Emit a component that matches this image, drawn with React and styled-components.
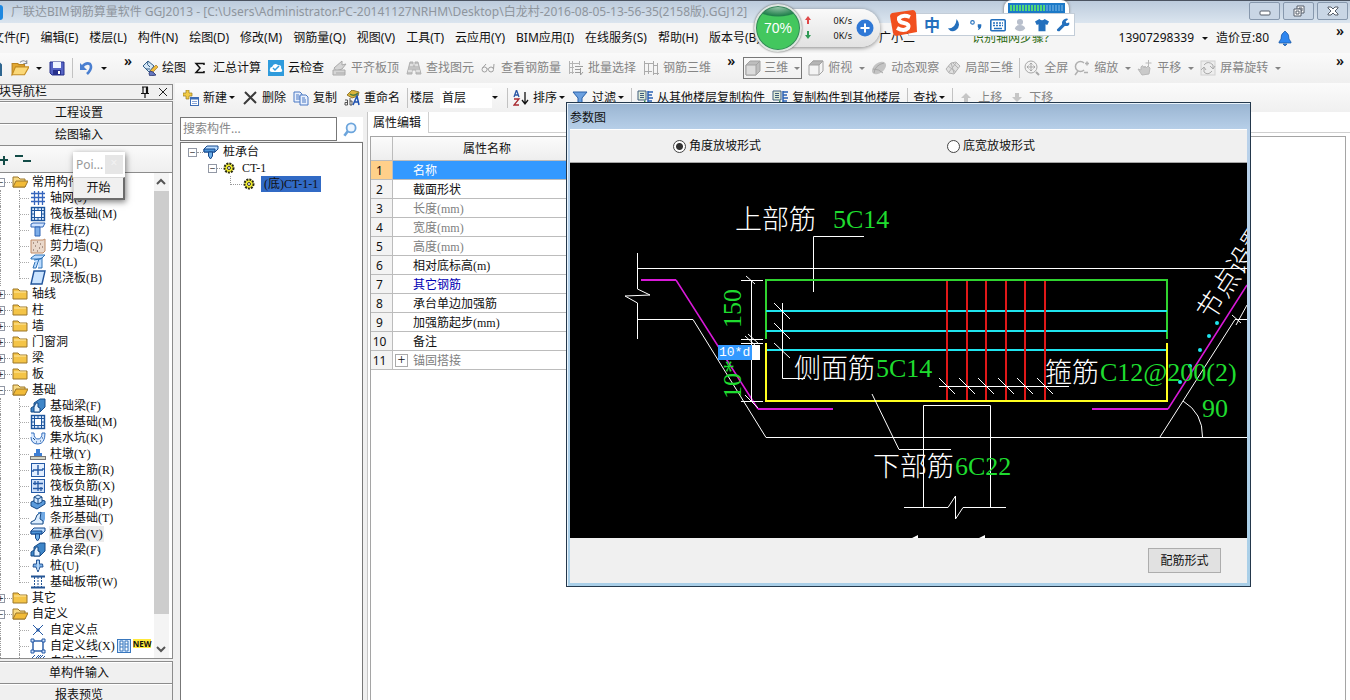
import React, { useState } from "react";
import styled, { createGlobalStyle } from "styled-components";

const GlobalStyle = createGlobalStyle`
  * {
    box-sizing: border-box;
  }

  body {
    margin: 0;
    overflow: hidden;
    background: #f0f0f0;
    color: #111111;
    font-family: "Noto Sans", "Noto Sans CJK SC", sans-serif;
    font-size: 12px;
    line-height: 16px;
  }

  button,
  input,
  select {
    margin: 0;
    padding: 0;
    border: 0;
    background: none;
    color: inherit;
    font: inherit;
  }
`;

const songFont = `"Liberation Serif", "Noto Sans CJK SC", serif`;

const beamShape = (
  <>
    <path d="M1 14V10L4 8V5L10 1H15V9L10 14Z" fill="#3f86c8" stroke="#174a86" />
    <path d="M4 14V9L6 5H8V9L10 10V14Z" fill="#e4f2ff" stroke="#174a86" />
  </>
);

const raftShape = (
  <g fill="none" stroke="#1d559c">
    <rect x="1.500" y="1.500" width="13" height="13" fill="#dcecff" strokeWidth="1.400" />
    <rect x="4.500" y="4.500" width="7" height="7" fill="#ffffff" />
    <path d="M4.500 2V14M11.500 2V14M2 4.500H14M2 11.500H14M8 2V4M8 12V14M2 8H4M12 8H14" />
  </g>
);

const pileCapShape = (
  <>
    <path d="M1 5L4 2H15V5L12 8H1Z" fill="#b9dcff" stroke="#17498c" />
    <path d="M1 5H12V8H1Z" fill="#4c94d8" stroke="#17498c" />
    <path d="M5.500 8H9.500V12L7.500 15L5.500 12Z" fill="#6fb0ea" stroke="#17498c" />
  </>
);

const shapes = {
  file: <path d="M1 1H9L13 5V15H1Z" fill="#fff" stroke="#2f6690" strokeWidth="2" />,
  open: (
    <>
      <path d="M1 4H6L7 5H12V8H5L1 14Z" fill="#e3a830" stroke="#b98320" />
      <path d="M4 7H16L12 14H1Z" fill="#fbd878" stroke="#c48c22" />
      <path d="M8 3Q11 0 14 3M14 1V4H11" fill="none" stroke="#8a8f98" />
    </>
  ),
  save: (
    <>
      <path d="M1 2H15V15H3L1 13Z" fill="#5563c4" stroke="#27318c" />
      <rect x="4" y="2" width="8" height="6" fill="#f0f4ff" />
      <rect x="4" y="10" width="8" height="5" fill="#27318c" />
      <rect x="9" y="11" width="2" height="3" fill="#fff" />
    </>
  ),
  undo: (
    <>
      <path d="M4 7Q8 2 12 4Q15 8 9 14" fill="none" stroke="#4a7fd0" strokeWidth="2.600" />
      <path d="M2 3V10H9Z" fill="#4a7fd0" />
    </>
  ),
  paint: (
    <>
      <path d="M1 6L6 1L12 6L7 12Z" fill="#d5e6f4" stroke="#345f89" />
      <path d="M6 1Q4 5 8 7M4 9H8" fill="none" stroke="#345f89" />
      <path d="M14 5L8 11L10 13L16 7Z" fill="#f0bc3c" stroke="#9a6a18" strokeWidth=".6" />
      <path d="M8 11Q6 14 8 16L14 15L11 12Z" fill="#6677bd" stroke="#3c4880" />
    </>
  ),
  sigma: <path d="M11 5V3.500H3L7 8L3 12.500H11V11" fill="none" stroke="#111" strokeWidth="1.500" />,
  cloud: (
    <>
      <rect width="16" height="16" fill="#2f9bdc" />
      <path d="M4 12Q1 12 2 9Q2 7 4 7Q6 2 10 5Q14 5 13 8Q16 12 12 12Z" fill="#fff" />
      <path d="M5 8L7 10L11 6" fill="none" stroke="#2f9bdc" strokeWidth="1.500" />
    </>
  ),
  flush: (
    <g fill="#d5d5d5" stroke="#a9a9a9">
      <path d="M3 8L11 1V5L15 4L11 9L5 11Z" />
      <path d="M2 10H14V15H2ZM5 13H14" />
    </g>
  ),
  binoculars: (
    <g fill="#c3c3c3" stroke="#b0b0b0">
      <path d="M4 2H7V6H9V2H12L15 14H10V10H6V14H1Z" />
      <path d="M4 5H7M9 5H12M2 11H6M10 11H14" stroke="#fff" />
    </g>
  ),
  glasses: (
    <g fill="none" stroke="#9f9f9f">
      <circle cx="3.500" cy="9.500" r="2.500" />
      <circle cx="10" cy="9.500" r="2.500" />
      <path d="M6 9H7.500M1.500 8L5 4M12.500 9L13 4" />
    </g>
  ),
  batch: (
    <g fill="none" stroke="#b4b4b4">
      <path d="M1.500 1V14M4.500 1V14M1 3.500H11M1 7.500H6M1 12.500H6M11.500 1V5" />
      <path d="M7 6.500H15M7 9.500H13M7 12.500H12M12.500 8V15L15 12" stroke="#9c9c9c" />
    </g>
  ),
  rebar: (
    <path
      d="M1.500 1V15M5.500 3V14M10.500 1V15M14.500 3V15M1 3.500H10M1 11.500H9M10 5.500H15M11 13.500H16"
      fill="none"
      stroke="#ababab"
    />
  ),
  cube: (
    <g stroke="#a2a2a2">
      <path d="M1 5L5 1H15V11L11 15H1Z" fill="#bdbdbd" />
      <path d="M1 5H11V15H1Z" fill="#dcdcdc" />
      <path d="M11 5L15 1" />
    </g>
  ),
  cubeTop: (
    <g stroke="#a2a2a2">
      <path d="M1 5L5 1H15V11L11 15H1Z" fill="#f4f4f4" />
      <path d="M1 5L5 1H15L11 5Z" fill="#b5b5b5" />
      <path d="M11 5V15" />
    </g>
  ),
  orbit: (
    <g>
      <ellipse cx="8" cy="8" rx="8" ry="5" fill="#c4c4c4" transform="rotate(-38 8 8)" />
      <path d="M3 13Q4 5 13 3M2 9Q8 9 12 13" fill="none" stroke="#a6a6a6" />
    </g>
  ),
  local: (
    <g fill="#e0e0e0" stroke="#b2b2b2">
      <path d="M1 9L6 3L11 2L15 6L9 14L4 13Z" />
      <path d="M3 6L11 12M8 3L13 8M11 3L4 12M6 3L9 13" fill="none" />
    </g>
  ),
  full: (
    <g fill="none" stroke="#a7a7a7">
      <circle cx="7" cy="7" r="6" fill="#f2f2f2" />
      <path d="M12 12L15 15" strokeWidth="2" />
      <path d="M7 3V11M3 7H11M5.500 4.500L7 3L8.500 4.500M5.500 9.500L7 11L8.500 9.500M4.500 5.500L3 7L4.500 8.500M9.500 5.500L11 7L9.500 8.500" />
    </g>
  ),
  zoom: (
    <g fill="none" stroke="#b0b0b0">
      <path d="M10 3A5 5 0 1 0 10 10" strokeWidth="1.500" />
      <path d="M4 11L1 15M11 3.500H15M13 1.500V5.500M10 12.500H14" strokeWidth="1.500" />
    </g>
  ),
  pan: (
    <g fill="#cacaca" stroke="#b8b8b8">
      <path d="M1 9L4 10V7Q6 4 7 8L8 6L9 8L11 6L13 8L12 14L5 15Z" />
      <path d="M11.500 0V6M8.500 3H14.500" />
    </g>
  ),
  rotate: (
    <g fill="none" stroke="#ababab">
      <rect x="1" y="1" width="14" height="14" fill="#ededed" stroke="#d0d0d0" />
      <path d="M4 5Q8 0 13 5V9M12 11Q8 16 4 12V8M10 6L13 9L15 6M1 10L4 7L6 10" />
    </g>
  ),
  add: (
    <>
      <path d="M3 0H6V3H9V6H6V9H3V6H0V3H3Z" fill="#f1ca45" stroke="#9a7d20" strokeWidth=".7" />
      <rect x="7.500" y="7.500" width="8" height="8" fill="#fff" stroke="#3e6db5" />
      <path d="M7 8.500H16" stroke="#3e6db5" strokeWidth="2" />
      <path d="M9 11.500H14M9 13.500H14" stroke="#8aa6d8" />
    </>
  ),
  remove: <path d="M3 2L14 13M14 2L2 14" fill="none" stroke="#3a3a3a" strokeWidth="2" />,
  copy: (
    <g fill="#e8f0fd" stroke="#4b79c3">
      <path d="M1 2H7L9 4V12H1ZM3 5H6M3 7H7M3 9H7" />
      <path d="M7 5H13L15 7V15H7ZM9 8H12M9 10H13M9 12H13" />
    </g>
  ),
  rename: (
    <>
      <path d="M3 5L8 0L15 2L14 6L8 8Z" fill="#dcb53b" stroke="#80631a" strokeWidth=".8" />
      <path d="M6 4Q10 7 14 3" fill="none" stroke="#4d7b3e" strokeWidth="1.500" />
      <path d="M1 10H3.500V15H1V12.500H3.500M6 8V15H8V11H6" fill="none" stroke="#444" strokeWidth=".9" />
      <path d="M9 15L13 6L15 15M10 12H15" fill="none" stroke="#1f52b0" strokeWidth="1.500" />
    </>
  ),
  sort: (
    <>
      <path d="M1 7L3.500 0L6 7M2 5H5" fill="none" stroke="#2b57a5" strokeWidth="1.300" />
      <path d="M1 9H6L1 15H6" fill="none" stroke="#a82a30" strokeWidth="1.300" />
      <path d="M12 2V13M9 10L12 14L15 10" fill="none" stroke="#111" strokeWidth="1.300" />
    </>
  ),
  filter: <path d="M1 2H15L10 8V15L6 12V8Z" fill="#6ba0e0" stroke="#2a61a8" />,
  floors: (
    <>
      <path d="M1 1H9V10H1ZM3 3.500H7M3 5.500H7M3 7.500H7" fill="#e0ecd8" stroke="#3f5c7c" />
      <path d="M11 1V15M11 2H16M11 5H15M11 8H16M11 11H15M11 14H16" stroke="#2b62b4" strokeWidth="1.500" />
      <path d="M4 15V12H7V10L10 13L7 16V15Z" fill="#2e8a4a" />
    </>
  ),
  up: <path d="M8 3L13 8H10V12H6V8H3Z" fill="#c6c6c6" />,
  down: <path d="M8 12L3 7H6V3H10V7H13Z" fill="#c6c6c6" />,
  folder: (
    <>
      <path d="M1 3H6L8 5H15V13H1Z" fill="#f4c447" stroke="#9b762b" />
      <path d="M2 6H14" stroke="#ffe9a6" />
    </>
  ),
  folderOpen: (
    <>
      <path d="M1 3H6L8 5H13V13H1Z" fill="#f8da83" stroke="#9b762b" />
      <path d="M4 7H16L13 13H1Z" fill="#f2bb38" stroke="#9b762b" />
    </>
  ),
  axis: (
    <path
      d="M4.500 1V15M8.500 1V15M12.500 1V15M1 3.500H15M1 7.500H15M1 11.500H15"
      fill="none"
      stroke="#3565bd"
      strokeWidth="1.300"
    />
  ),
  raft: raftShape,
  column: (
    <g fill="#cfe3ff" stroke="#2f65b5">
      <path d="M1 2L3 1H15L13 5H1Z" />
      <path d="M5 5H10V14H5Z" fill="#7eaee8" />
    </g>
  ),
  wall: (
    <>
      <path d="M1 2H13L15 1V13L13 15H1Z" fill="#ead9cb" stroke="#bd8a67" />
      <path d="M3 5H4M7 4H8M10 6H11M5 8H6M9 10H10M3 12H4M7 13H8M12 9H13" stroke="#6e5044" />
    </>
  ),
  beam: (
    <path
      d="M1 4L5 1H15L11 5H1ZM4 6L9 5L6 14H3L5 8M9 5L12 4V14H8"
      fill="#bcdcff"
      stroke="#2f72b5"
    />
  ),
  slab: <path d="M4 1H15L12 14H1Z" fill="#cbe4ff" stroke="#23559c" strokeWidth="1.400" />,
  foundBeam: beamShape,
  pit: (
    <>
      <path d="M1 3H4Q4 9 8 9T12 3H15Q15 14 8 14T1 7" fill="#d8e9ff" stroke="#356fbd" />
      <path d="M3 8L5 10M6 12H7M10 11H11M12 8H13" stroke="#174a86" />
    </>
  ),
  pier: (
    <>
      <path d="M6 3H10V7H12V10H4V7H6Z" fill="#3e7fd4" />
      <rect x=".5" y="10.500" width="15" height="3" fill="#d4d4c4" stroke="#777" />
    </>
  ),
  mainBar: (
    <g fill="none" stroke="#2459a5">
      <rect x="1.500" y="1.500" width="13" height="13" fill="#e3efff" />
      <path d="M8 3V13M3 8H13M3 8V10M13 8V6" strokeWidth="1.400" />
    </g>
  ),
  negBar: (
    <g fill="none" stroke="#2459a5">
      <rect x="1.500" y="1.500" width="13" height="13" fill="#cfe1fa" />
      <path d="M8 3V13M3 5.500H13M3 10.500H13M5 3V7M11 9V13" strokeWidth="1.300" />
    </g>
  ),
  isolated: (
    <g stroke="#174a86">
      <path d="M1 8L8 5L15 7V10L7 15L1 12Z" fill="#5a9adb" />
      <path d="M4 3L8 1L12 3V8L8 10L4 8Z" fill="#cce5ff" />
      <path d="M8 5V10M8 5L12 3M4 3L8 5" />
    </g>
  ),
  strip: (
    <>
      <path d="M8 2H15V9L13 14H9Z" fill="#70a9e4" />
      <path d="M1 14V12L5 10L7 5L11 2L10 9L13 11V14Z" fill="#dceeff" stroke="#174a86" />
    </>
  ),
  pileCap: pileCapShape,
  pile: (
    <g stroke="#245595">
      <path d="M6.500 2H9.500V6H12.500L13 9H10L8 14L6 9H3L3.500 6H6.500Z" fill="#7fb4eb" />
      <path d="M8 3V12" stroke="#e9f5ff" />
    </g>
  ),
  band: (
    <g stroke="#245595">
      <path d="M1 2.500H15M1 13.500H15" strokeWidth="2" />
      <path d="M4.500 3V13M8 3V13M11.500 3V13" strokeDasharray="2 1" />
    </g>
  ),
  point: <path d="M3 3L13 13M13 3L3 13M6 8H10M8 6V10" stroke="#2459a5" />,
  line: (
    <g fill="#fff" stroke="#2459a5">
      <rect x="3" y="3" width="10" height="10" strokeWidth="1.400" />
      <path d="M1 1H4V4H1ZM12 1H15V4H12ZM1 12H4V15H1ZM12 12H15V15H12Z" fill="#cfe3ff" />
    </g>
  ),
  area: <path d="M1 5L5 1M5 5L9 1M9 5L13 1M1 11L11 1M3 14L15 2" stroke="#2459a5" />,
  gear: (
    <>
      <circle cx="7" cy="8" r="4.500" fill="#f3ee2c" stroke="#2a2a12" strokeDasharray="2 1" strokeWidth="2" />
      <circle cx="7" cy="8" r="1.500" fill="#fff" stroke="#333" />
    </>
  ),
  search: (
    <>
      <circle cx="9" cy="7" r="4" fill="#eef6ff" stroke="#6ca5dc" strokeWidth="1.600" />
      <path d="M6 10L3 14" stroke="#6ca5dc" strokeWidth="2.400" />
    </>
  ),
  pin: <path d="M5 3H11M6 3V9M9.500 3V9M10.500 3V9M4 9.500H12M8 10V14" stroke="#111" strokeWidth="1.200" fill="none" />,
  close: <path d="M4 4L12 12M12 4L4 12" stroke="#222" />,
  bell: (
    <path
      d="M8 1L10 3Q12 4 12 9L14 12V13H2V12L4 9Q4 4 6 3ZM6 14H10L8 16Z"
      fill="#2e86f0"
      stroke="#16539e"
      strokeWidth=".7"
    />
  ),
  compare: (
    <g fill="#fff" stroke="#3977bd">
      <rect x="1.500" y="1.500" width="13" height="13" fill="#d7eaff" />
      <path d="M4 3H7V13H4ZM9 3H12V13H9ZM4 6H7M4 9H7M9 6H12M9 9H12" />
    </g>
  ),
  moon: <path d="M11 1Q17 9 10 14Q5 17 1 12Q10 12 11 1Z" fill="#2470bd" />,
  comma: (
    <>
      <circle cx="4" cy="5" r="2" fill="none" stroke="#2470bd" strokeWidth="1.300" />
      <path d="M10 7H14Q15 12 10 14Q12 12 10 10Z" fill="#2470bd" />
    </>
  ),
  keyboard: (
    <>
      <rect x=".8" y="2.800" width="14.400" height="11" rx="1" fill="#fff" stroke="#2470bd" strokeWidth="1.600" />
      <path d="M3 6H13M3 8.500H13" stroke="#2470bd" strokeWidth="1.500" strokeDasharray="2 1" />
      <path d="M4 11.500H12" stroke="#2470bd" strokeWidth="1.500" />
    </>
  ),
  person: (
    <g fill="#b8bfcc">
      <circle cx="8" cy="4.500" r="3.500" />
      <path d="M2 12Q3 8 8 8T14 12Q12 15 8 15T2 12Z" />
    </g>
  ),
  shirt: <path d="M5 1Q8 4 11 1L16 4L14 8L12 7V15H4V7L2 8L0 4Z" fill="#2470bd" />,
  wrench: (
    <path
      d="M10 1Q12 0 14 1L11 4L12 6L15 5Q16 8 13 9L10 9L4 15Q1 16 1 13L7 7Q6 3 10 1Z"
      fill="#2470bd"
    />
  ),
};

const Icon = ({ name, size = 16 }) => (
  <IconSvg viewBox="0 0 16 16" width={size} height={size} aria-hidden="true">
    {shapes[name]}
  </IconSvg>
);

const IconSvg = styled.svg`
  display: block;
  flex: none;
  fill: none;
`;

const menus = [
  "文件(F)",
  "编辑(E)",
  "楼层(L)",
  "构件(N)",
  "绘图(D)",
  "修改(M)",
  "钢筋量(Q)",
  "视图(V)",
  "工具(T)",
  "云应用(Y)",
  "BIM应用(I)",
  "在线服务(S)",
  "帮助(H)",
  "版本号(B)",
];

const drawTools = [
  { icon: "paint", label: "绘图" },
  { icon: "sigma", label: "汇总计算" },
  { icon: "cloud", label: "云检查" },
  { icon: "flush", label: "平齐板顶", dim: true },
  { icon: "binoculars", label: "查找图元", dim: true },
  { icon: "glasses", label: "查看钢筋量", dim: true },
  { icon: "batch", label: "批量选择", dim: true },
  { icon: "rebar", label: "钢筋三维", dim: true },
];

const viewTools = [
  { icon: "cubeTop", label: "俯视", caret: true },
  { icon: "orbit", label: "动态观察" },
  { icon: "local", label: "局部三维" },
  { divider: true },
  { icon: "full", label: "全屏" },
  { icon: "zoom", label: "缩放", caret: true },
  { icon: "pan", label: "平移", caret: true },
  { icon: "rotate", label: "屏幕旋转", caret: true },
];

const componentTree = [
  { label: "常用构件类型", open: true },
  { label: "轴网(J)", icon: "axis" },
  { label: "筏板基础(M)", icon: "raft" },
  { label: "框柱(Z)", icon: "column" },
  { label: "剪力墙(Q)", icon: "wall" },
  { label: "梁(L)", icon: "beam" },
  { label: "现浇板(B)", icon: "slab", last: true },
  { label: "轴线" },
  { label: "柱" },
  { label: "墙" },
  { label: "门窗洞" },
  { label: "梁" },
  { label: "板" },
  { label: "基础", open: true },
  { label: "基础梁(F)", icon: "foundBeam" },
  { label: "筏板基础(M)", icon: "raft" },
  { label: "集水坑(K)", icon: "pit" },
  { label: "柱墩(Y)", icon: "pier" },
  { label: "筏板主筋(R)", icon: "mainBar" },
  { label: "筏板负筋(X)", icon: "negBar" },
  { label: "独立基础(P)", icon: "isolated" },
  { label: "条形基础(T)", icon: "strip" },
  { label: "桩承台(V)", icon: "pileCap", active: true },
  { label: "承台梁(F)", icon: "foundBeam" },
  { label: "桩(U)", icon: "pile" },
  { label: "基础板带(W)", icon: "band", last: true },
  { label: "其它" },
  { label: "自定义", open: true },
  { label: "自定义点", icon: "point" },
  { label: "自定义线(X)", icon: "line", isNew: true },
  { label: "自定义面", icon: "area" },
];

const properties = [
  { name: "名称" },
  { name: "截面形状" },
  { name: "长度(mm)", color: "#808080" },
  { name: "宽度(mm)", color: "#808080" },
  { name: "高度(mm)", color: "#808080" },
  { name: "相对底标高(m)" },
  { name: "其它钢筋", color: "#0000b4" },
  { name: "承台单边加强筋" },
  { name: "加强筋起步(mm)" },
  { name: "备注" },
  { name: "锚固搭接", color: "#808080", group: true },
];

const stirrups = [947, 967, 986, 1006, 1025, 1045];
const anchorDots = [
  [1217, 323],
  [1209, 336],
  [1200, 350],
  [1190, 366],
  [1180, 382],
];

const ToolItem = ({ icon, label, dim, caret, framed }) => (
  <ToolButton type="button" $dim={dim} $framed={framed}>
    {icon && <Icon name={icon} />}
    {label}
    {caret && <Caret $gap={dim ? 3 : -2} />}
  </ToolButton>
);

const SectionDrawing = () => (
  <Drawing viewBox="570 163 677 375" preserveAspectRatio="xMinYMin slice">
    <g stroke="#ffffff">
      <path d="M637.500 253V289L650 295L625 296L637.500 303V339" />
      <path d="M637 268.500H1247" />
      <path d="M637 319.500H693L766 437.500H1247" />
      <path d="M864 236.500H813.500V292" />
    </g>
    <g stroke="#d819d8">
      <path d="M641 280H676M758 409H833M1092 409H1168" strokeWidth="2" />
      <path d="M676 280L758 409M1168 409L1247 285" strokeWidth="1.500" />
    </g>
    <path d="M766 339V280H1167V339" stroke="#2fd32f" strokeWidth="2" />
    <path d="M766 311H1167M766 331H1167M766 350H1167" stroke="#1fe4ee" strokeWidth="2" />
    {stirrups.map((x) => (
      <path key={x} d={`M${x} 281V401`} stroke="#e01818" strokeWidth="2" />
    ))}
    <path d="M766 343V401H1167V343" stroke="#ffff20" strokeWidth="2" />
    <g stroke="#ffffff">
      <path d="M751.500 280V401M741 280.500H763M741 339.500H763M741 343.500H763M741 401.500H763" />
      <path d="M746 276L755 284M745 336L756 346M748 334L759 344M745 395L758 408" />
      <path d="M782.500 303V378.500H805M774 303L790 319M774 323L790 339M774 343L790 358" />
      <path d="M939 386.500H1069" />
      {stirrups.map((x) => (
        <path key={x} d={`M${x - 8} 378L${x + 8} 394`} />
      ))}
      <path d="M872 394L899 449.500H951" />
      <path d="M923.500 507V405.500H990.500V507M904 507.500H948L955.500 496V519L963 507.500H1006" />
      <path d="M1160 437L1235 319.500H1247M1232 315L1241 323M1236 325L1247 305" />
      <path d="M1183 401Q1203 413 1202.500 437" />
    </g>
    <g fill="#ffffff" stroke="none">
      <path d="M912 538L918 535V538ZM979 538L985 535V538Z" />
    </g>
    <g fill="#1fe4ee">
      {anchorDots.map(([x, y]) => (
        <circle key={x} cx={x} cy={y} r="2" />
      ))}
    </g>
    <DrawingLabel x="735" y="229">上部筋</DrawingLabel>
    <DrawingLabel x="794" y="378">侧面筋</DrawingLabel>
    <DrawingLabel x="1045" y="382">箍筋</DrawingLabel>
    <DrawingLabel x="873" y="476">下部筋</DrawingLabel>
    <DrawingLabel transform="translate(1212 322) rotate(-57)">节点设置</DrawingLabel>
    <DrawingValue x="833" y="228">5C14</DrawingValue>
    <DrawingValue x="876" y="377">5C14</DrawingValue>
    <DrawingValue x="1100" y="381">C12@200(2)</DrawingValue>
    <DrawingValue x="1202" y="417">90</DrawingValue>
    <DrawingValue x="955" y="475">6C22</DrawingValue>
    <DrawingValue transform="translate(741 328) rotate(-90)">150</DrawingValue>
    <DrawingValue transform="translate(741 399) rotate(-90)">10*d</DrawingValue>
  </Drawing>
);

const ParamDialog = () => {
  const [slope, setSlope] = useState("angle");

  return (
    <Dialog role="dialog" aria-label="参数图">
      <DialogTitle>参数图</DialogTitle>
      <DialogBody>
        <SlopeOptions>
          <SlopeLabel>
            <input
              type="radio"
              name="slope"
              checked={slope === "angle"}
              onChange={() => setSlope("angle")}
            />
            角度放坡形式
          </SlopeLabel>
          <SlopeLabel>
            <input
              type="radio"
              name="slope"
              checked={slope === "width"}
              onChange={() => setSlope("width")}
            />
            底宽放坡形式
          </SlopeLabel>
        </SlopeOptions>
        <Canvas>
          <SectionDrawing />
          <ValueInput aria-label="高度" defaultValue="10*d" />
        </Canvas>
        <DialogFooter>
          <FooterButton type="button">配筋形式</FooterButton>
        </DialogFooter>
      </DialogBody>
    </Dialog>
  );
};

const ModuleNav = () => (
  <Nav>
    <NavHeader>
      <span>模块导航栏</span>
      <Icon name="pin" />
      <Icon name="close" />
    </NavHeader>
    <NavButton type="button">工程设置</NavButton>
    <NavButton type="button">绘图输入</NavButton>
    <NavTools>
      <svg width="46" height="16" viewBox="0 0 46 16">
        <path
          d="M6 4H12M9 1V7M13 9H22M18 5V14M29 5H37M37 10H45"
          fill="none"
          stroke="#124b47"
          strokeWidth="2"
        />
      </svg>
    </NavTools>
    <TreeArea>
      <TreeList>
        {componentTree.map((item, index) =>
          item.icon ? (
            <ChildRow key={index} $last={item.last}>
              <i />
              <b />
              <Icon name={item.icon} />
              <TreeLabel $active={item.active}>{item.label}</TreeLabel>
              {item.isNew && (
                <>
                  <Icon name="compare" />
                  <NewBadge>NEW</NewBadge>
                </>
              )}
            </ChildRow>
          ) : (
            <FolderRow key={index}>
              <Expander>{item.open ? "−" : "+"}</Expander>
              <Dots $width={7} />
              <Icon name={item.open ? "folderOpen" : "folder"} />
              <TreeLabel>{item.label}</TreeLabel>
            </FolderRow>
          )
        )}
      </TreeList>
      <ScrollTrack>
        <svg width="14" height="18" viewBox="0 0 14 18">
          <path d="M3 11L7 7L11 11" fill="none" stroke="#555" strokeWidth="2" />
        </svg>
        <ScrollThumb />
        <ScrollRest />
        <svg width="14" height="18" viewBox="0 0 14 18">
          <path d="M3 7L7 11L11 7" fill="none" stroke="#555" strokeWidth="2" />
        </svg>
      </ScrollTrack>
    </TreeArea>
    <NavButton type="button">单构件输入</NavButton>
    <NavButton type="button">报表预览</NavButton>
  </Nav>
);

const App = () => (
  <>
    <GlobalStyle />
    <Page>
      <TitleBar>
        <AppMark />
        <span>
          广联达BIM钢筋算量软件 GGJ2013 - [C:\Users\Administrator.PC-20141127NRHM\Desktop\白龙村-2016-08-05-13-56-35(2158版).GGJ12]
        </span>
        <WindowButtons>
          <button type="button" aria-label="最小化">
            <svg width="16" height="16" viewBox="0 0 16 16">
              <rect x="3" y="8" width="10" height="4" rx="1" fill="#fff" stroke="#555d68" />
            </svg>
          </button>
          <button type="button" aria-label="还原">
            <svg width="16" height="16" viewBox="0 0 16 16" fill="#fff" stroke="#555d68">
              <path d="M6 3H13V10H6ZM8 5H11V8H8Z" />
              <path d="M3 6H10V13H3ZM5 8H8V11H5Z" />
            </svg>
          </button>
          <button type="button" aria-label="关闭">
            <svg width="16" height="16" viewBox="0 0 16 16">
              <path
                d="M3 4H6L8 6L10 4H13V5L10 8L13 11V12H10L8 10L6 12H3V11L6 8L3 5Z"
                fill="#fff"
                stroke="#555d68"
              />
            </svg>
          </button>
        </WindowButtons>
      </TitleBar>

      <MenuBar>
        <MenuList>
          {menus.map((menu) => (
            <button type="button" key={menu}>
              {menu}
            </button>
          ))}
        </MenuList>
        <UserName>广小二</UserName>
        <HelpLink href="#help">识别轴网步骤?</HelpLink>
        <Account>
          13907298339
          <Caret />
          <span>造价豆:80</span>
          <Icon name="bell" />
        </Account>
        <More>»</More>
      </MenuBar>

      <ToolBar>
        <QuickTools>
          <Icon name="file" />
          <Icon name="open" size={18} />
          <Caret />
          <Icon name="save" />
          <Divider />
          <Icon name="undo" />
          <Caret />
        </QuickTools>
        <More>»</More>
        <DrawGroup>
          {drawTools.map((tool) => (
            <ToolItem key={tool.label} {...tool} />
          ))}
        </DrawGroup>
        <More>»</More>
        <ViewGroup>
          <ToolItem icon="cube" label="三维" dim caret framed />
          {viewTools.map((tool, index) =>
            tool.divider ? <Divider key={index} /> : <ToolItem key={index} dim {...tool} />
          )}
        </ViewGroup>
        <LastMore>»</LastMore>
      </ToolBar>

      <Workspace>
        <ModuleNav />
        <Main>
          <EditBar>
            <ToolItem icon="add" label="新建" caret />
            <ToolItem icon="remove" label="删除" />
            <ToolItem icon="copy" label="复制" />
            <ToolItem icon="rename" label="重命名" />
            <FloorField>
              楼层
              <FloorSelect defaultValue="首层">
                <option>首层</option>
              </FloorSelect>
              <Caret />
            </FloorField>
            <Divider />
            <ToolItem icon="sort" label="排序" caret />
            <ToolItem icon="filter" label="过滤" caret />
            <Divider />
            <ToolItem icon="floors" label="从其他楼层复制构件" />
            <ToolItem icon="floors" label="复制构件到其他楼层" />
            <Divider />
            <ToolItem label="查找" caret />
            <Divider />
            <ToolItem icon="up" label="上移" dim />
            <ToolItem icon="down" label="下移" dim />
          </EditBar>
          <Panels>
            <ComponentPanel>
              <SearchRow>
                <input type="text" aria-label="搜索构件" placeholder="搜索构件..." />
                <button type="button" aria-label="搜索">
                  <Icon name="search" size={18} />
                </button>
              </SearchRow>
              <ComponentTree>
                <ComponentRow $level={0}>
                  <Expander>−</Expander>
                  <Dots $width={6} />
                  <Icon name="pileCap" />
                  <TreeLabel>桩承台</TreeLabel>
                </ComponentRow>
                <ComponentRow $level={1}>
                  <Expander>−</Expander>
                  <Dots $width={5} />
                  <Icon name="gear" />
                  <TreeLabel>CT-1</TreeLabel>
                </ComponentRow>
                <ComponentRow $level={2}>
                  <Corner />
                  <Icon name="gear" />
                  <SelectedLabel>(底)CT-1-1</SelectedLabel>
                </ComponentRow>
              </ComponentTree>
            </ComponentPanel>
            <PropertyPanel>
              <TabRow>
                <Tab type="button">属性编辑</Tab>
              </TabRow>
              <GridFrame>
                <PropertyTable>
                  <thead>
                    <tr>
                      <th />
                      <th>属性名称</th>
                      <th />
                    </tr>
                  </thead>
                  <tbody>
                    {properties.map(({ name, color, group }, index) => (
                      <PropertyRow key={name} $selected={index === 0} $color={color}>
                        <td>{index + 1}</td>
                        <td>
                          <NameCell>
                            <span>{group && <GroupBox>+</GroupBox>}</span>
                            {name}
                          </NameCell>
                        </td>
                        <td />
                      </PropertyRow>
                    ))}
                  </tbody>
                </PropertyTable>
              </GridFrame>
            </PropertyPanel>
          </Panels>
        </Main>
      </Workspace>

      <ParamDialog />

      <PointWindow>
        <PointTitle>
          Poi...
          <span>×</span>
        </PointTitle>
        <button type="button">开始</button>
      </PointWindow>

      <SpeedWidget>
        <SpeedBall>70%</SpeedBall>
        <SpeedPill>
          <svg width="8" height="30" viewBox="0 0 8 30">
            <path d="M4 3L7 7H5V11H3V7H1Z" fill="#e04848" />
            <path d="M4 26L1 22H3V18H5V22H7Z" fill="#2f9a55" />
          </svg>
          <Speeds>
            <span>0K/s</span>
            <span>0K/s</span>
          </Speeds>
          <svg width="18" height="18" viewBox="0 0 18 18">
            <circle cx="9" cy="9" r="8.500" fill="#2f78d6" />
            <path d="M9 4.500V13.500M4.500 9H13.500" stroke="#fff" strokeWidth="2" />
          </svg>
        </SpeedPill>
      </SpeedWidget>

      <MeterTab>
        <Meter>
          {Array.from({ length: 18 }, (_, index) => (
            <MeterBar key={index} $on={index < 12} />
          ))}
        </Meter>
      </MeterTab>
      <ImeBar>
        <svg width="28" height="28" viewBox="0 0 28 28">
          <path d="M2 4L23 1Q25 1 26 4L27 23L6 27Q4 27 3 24L0 7Q0 5 2 4Z" fill="#f1501f" />
          <path
            d="M20 8Q13 5 9 9Q8 13 14 14Q20 15 18 19Q14 23 7 19"
            fill="none"
            stroke="#fff"
            strokeWidth="4"
          />
        </svg>
        <ImeTools>
          <ImeMode>中</ImeMode>
          <Icon name="moon" size={14} />
          <Icon name="comma" size={14} />
          <Icon name="keyboard" />
          <Icon name="person" size={14} />
          <Icon name="shirt" size={14} />
          <Icon name="wrench" size={14} />
        </ImeTools>
      </ImeBar>
    </Page>
  </>
);

const Page = styled.div`
  position: relative;
  display: flex;
  flex-direction: column;
  height: calc(100vh + 5px);
  overflow: hidden;
`;

const TitleBar = styled.header`
  display: flex;
  flex: none;
  align-items: center;
  height: 23px;
  border-top: 1px solid #4b5360;
  background: linear-gradient(#bccbdc, #dbe5ef);
  color: #8e959d;
  white-space: nowrap;
`;

const AppMark = styled.span`
  width: 3px;
  height: 15px;
  margin-right: 8px;
  border-radius: 0 3px 3px 0;
  background: #1e88e0;
`;

const WindowButtons = styled.div`
  display: flex;
  gap: 3px;
  margin: 0 2px 2px auto;

  button {
    display: flex;
    align-items: center;
    justify-content: center;
    width: 31px;
    height: 18px;
    border: 1px solid #8798ad;
    border-radius: 2px;
    background: #c9d6e5;
  }
`;

const MenuBar = styled.nav`
  display: flex;
  flex: none;
  align-items: center;
  height: 30px;
  background: #f5f5f5;
  white-space: nowrap;
`;

const MenuList = styled.div`
  display: flex;
  flex: none;
  gap: 11px;
  width: 887px;
  margin-left: -8px;
`;

const UserName = styled.span`
  width: 93px;
`;

const HelpLink = styled.a`
  color: #2e6b12;
  text-decoration: none;
`;

const Account = styled.div`
  display: flex;
  align-items: center;
  gap: 8px;
  margin-left: auto;
  margin-right: 43px;
`;

const More = styled.span`
  align-self: flex-start;
  width: 12px;
  margin-right: 2px;
  font-size: 14px;
  font-weight: 600;
`;

const LastMore = styled(More)`
  margin-left: auto;
`;

const Caret = styled.span`
  flex: none;
  width: 0;
  height: 0;
  margin-left: ${({ $gap = 0 }) => $gap}px;
  border: 3px solid transparent;
  border-top-color: currentColor;
  border-bottom: 0;
`;

const ToolBar = styled.div`
  display: flex;
  flex: none;
  align-items: center;
  height: 30px;
  background: linear-gradient(#fafafa, #efefef);
  white-space: nowrap;
`;

const QuickTools = styled.div`
  display: flex;
  flex: none;
  align-items: center;
  gap: 7px;
  width: 124px;
  margin-left: -12px;
  margin-right: 12px;
`;

const DrawGroup = styled.div`
  display: flex;
  gap: 7px;
  margin-left: 4px;
  margin-right: 16px;
`;

const ViewGroup = styled.div`
  display: flex;
  align-items: center;
  gap: 6px;
  margin-left: 2px;
`;

const ToolButton = styled.button`
  display: flex;
  flex: none;
  align-items: center;
  gap: ${({ $framed }) => ($framed ? "3px" : "4px")};
  height: 22px;
  padding: ${({ $framed }) => ($framed ? "0 1px" : "0")};
  border: ${({ $framed }) => ($framed ? "1px solid #777777" : "0")};
  color: ${({ $dim }) => ($dim ? "#858585" : "#111111")};
`;

const Divider = styled.span`
  flex: none;
  width: 1px;
  height: 20px;
  margin-right: -2px;
  background: #c2c2c2;
`;

const Workspace = styled.div`
  display: flex;
  flex: 1;
  min-height: 0;
`;

const Nav = styled.aside`
  display: flex;
  flex: none;
  flex-direction: column;
  width: 187px;
  margin-left: -14px;
  padding-top: 1px;
`;

const NavHeader = styled.div`
  display: flex;
  flex: none;
  align-items: center;
  height: 16px;
  margin-bottom: 1px;
  padding-right: 1px;
  border: 1px solid #8c8c8c;

  span {
    flex: 1;
  }

  svg + svg {
    margin-left: 2px;
  }
`;

const NavButton = styled.button`
  flex: none;
  height: 22px;
  border-top: 1px solid #8c8c8c;
  border-right: 1px solid #8c8c8c;
  background: #f0f0f0;
  box-shadow: inset 0 1px #ffffff;
`;

const NavTools = styled.div`
  display: flex;
  flex: none;
  align-items: center;
  height: 27px;
  border-top: 1px solid #8c8c8c;
  border-right: 1px solid #8c8c8c;
  background: linear-gradient(#fafafa, #efefef);
`;

const TreeArea = styled.div`
  display: flex;
  flex: 1;
  min-height: 0;
  margin-bottom: 2px;
  padding-right: 3px;
  border: 1px solid #8c8c8c;
  background: #ffffff;
`;

const TreeList = styled.div`
  flex: 1;
  overflow: hidden;
  padding-top: 1px;
`;

const FolderRow = styled.div`
  display: flex;
  align-items: center;
  height: 16px;
  padding-left: 9px;
`;

const ChildRow = styled(FolderRow)`
  padding-left: 13px;

  i {
    width: 19px;
    height: 16px;
    border-left: 1px dotted #999999;
  }

  b {
    align-self: flex-start;
    width: 11px;
    height: ${({ $last }) => ($last ? "9px" : "16px")};
    border-left: 1px dotted #999999;
    background: linear-gradient(90deg, #aaaaaa 50%, transparent 50%) 0 8px / 2px 1px repeat-x;
  }
`;

const Expander = styled.span`
  flex: none;
  width: 9px;
  height: 9px;
  border: 1px solid #9298a5;
  background: #ffffff;
  color: #333333;
  font-size: 10px;
  line-height: 6px;
  text-align: center;
`;

const Dots = styled.span`
  width: ${({ $width }) => $width}px;
  border-top: 1px dotted #999999;
`;

const TreeLabel = styled.span`
  margin-left: 3px;
  padding: 0 1px;
  background: ${({ $active }) => ($active ? "#ececec" : "transparent")};
  font-family: ${songFont};
  white-space: nowrap;
`;

const SelectedLabel = styled(TreeLabel)`
  padding: 0 3px;
  background: #316ac5;
`;

const NewBadge = styled.strong`
  margin-left: 1px;
  margin-bottom: 6px;
  background: #ffe93b;
  font-size: 8px;
  line-height: 9px;
`;

const ScrollTrack = styled.div`
  display: flex;
  flex: none;
  flex-direction: column;
  width: 15px;
  background: #f4f4f4;
`;

const ScrollThumb = styled.div`
  flex: 16;
  background: #cdcdcd;
`;

const ScrollRest = styled.div`
  flex: 1;
`;

const Main = styled.main`
  display: flex;
  flex: 1;
  flex-direction: column;
  min-width: 0;
  margin-left: 2px;
`;

const EditBar = styled.div`
  display: flex;
  flex: none;
  align-items: center;
  gap: 7px;
  height: 29px;
  padding-left: 8px;
  background: linear-gradient(#fbfbfb, #f0f0f0);
  white-space: nowrap;
`;

const FloorField = styled.label`
  display: flex;
  align-items: center;
  padding-left: 2px;
  padding-right: 2px;
  border-left: 1px solid #c2c2c2;
`;

const FloorSelect = styled.select`
  appearance: none;
  width: 52px;
  height: 20px;
  margin-left: 6px;
  padding-left: 2px;
  background: #ffffff;
`;

const Panels = styled.div`
  display: flex;
  flex: 1;
  min-height: 0;
`;

const ComponentPanel = styled.section`
  display: flex;
  flex: none;
  flex-direction: column;
  width: 183px;
  margin-left: 5px;
  padding-top: 5px;
`;

const SearchRow = styled.div`
  display: flex;
  flex: none;
  height: 25px;
  padding-bottom: 1px;

  input {
    flex: 1;
    min-width: 0;
    padding-left: 2px;
    border: 1px solid #777777;
    background: #ffffff;
  }

  input::placeholder {
    color: #888888;
  }

  button {
    display: flex;
    align-items: center;
    justify-content: center;
    width: 26px;
    background: #ffffff;
  }
`;

const ComponentTree = styled.div`
  flex: 1;
  padding-top: 1px;
  border: 1px solid #777777;
  background: #ffffff;
`;

const ComponentRow = styled.div`
  display: flex;
  align-items: center;
  height: 16px;
  padding-left: ${({ $level }) => 7 + $level * 20}px;
`;

const Corner = styled.span`
  align-self: flex-start;
  width: 12px;
  height: 9px;
  margin-left: 2px;
  border: 1px dotted #999999;
  border-top: 0;
  border-right: 0;
`;

const PropertyPanel = styled.section`
  display: flex;
  flex: 1;
  flex-direction: column;
  min-width: 0;
  margin-left: 4px;
  border-left: 1px solid #c6c6c6;
  background: #ffffff;
`;

const TabRow = styled.div`
  display: flex;
  flex: none;
  height: 21px;
  box-shadow: inset 0 -1px #cfcfcf;
`;

const Tab = styled.button`
  padding: 0 7px 0 5px;
  border-right: 1px solid #cfcfcf;
  background: #ffffff;
`;

const GridFrame = styled.div`
  flex: 1;
  margin: 3px 4px 0 2px;
  border: 1px solid #a5a5a5;
  border-bottom: 0;
`;

const PropertyTable = styled.table`
  width: 80%;
  border-collapse: separate;
  border-spacing: 0;
  table-layout: fixed;

  th {
    height: 24px;
    padding: 0;
    border-right: 1px solid #bcbcbc;
    border-bottom: 1px solid #bcbcbc;
    background: linear-gradient(#fbfbfb, #eeeeee);
    font-weight: 400;
  }

  th:first-child {
    width: 22px;
  }

  th:nth-child(2) {
    width: 189px;
  }
`;

const PropertyRow = styled.tr`
  color: ${({ $selected, $color }) => ($selected ? "#ffffff" : $color || "#111111")};

  td {
    height: 19px;
    padding: 1px 0 0;
    border-right: 1px solid #bcbcbc;
    border-bottom: 1px solid #bcbcbc;
    background: ${({ $selected }) => ($selected ? "#3399ff" : "#ffffff")};
    font-family: ${songFont};
  }

  td:first-child {
    padding-right: 4px;
    background: ${({ $selected }) => ($selected ? "#ffd08a" : "#f3f3f3")};
    color: #111111;
    font-family: "Noto Sans", sans-serif;
    text-align: center;
  }
`;

const NameCell = styled.span`
  display: flex;
  align-items: center;

  > span {
    width: 20px;
    padding-left: 2px;
  }
`;

const GroupBox = styled.span`
  display: block;
  width: 13px;
  height: 13px;
  border: 1px solid #aaaaaa;
  color: #111111;
  font-size: 14px;
  line-height: 10px;
  text-align: center;
`;

const Dialog = styled.section`
  position: absolute;
  top: 102px;
  left: 566px;
  width: 685px;
  padding: 1px 3px 3px;
  border: 1px solid #24384c;
  background: linear-gradient(#99b4d1, #b9d1ea 28px, #a9cfe8);
  box-shadow: inset 1px 1px #e9f3fb;
`;

const DialogTitle = styled.h2`
  height: 25px;
  margin: 0;
  font-size: 12px;
  font-weight: 400;
  line-height: 28px;
`;

const DialogBody = styled.div`
  background: #f0f0f0;
  border-top: 1px solid #ffffff;
`;

const SlopeOptions = styled.div`
  display: grid;
  grid-template-columns: 274px 1fr;
  align-items: center;
  height: 33px;
  padding-left: 103px;
  border-bottom: 1px solid #a5a5a5;
`;

const SlopeLabel = styled.label`
  display: flex;
  align-items: center;
  gap: 3px;

  input {
    appearance: none;
    width: 13px;
    height: 13px;
    border: 1px solid #444444;
    border-radius: 50%;
    background: #ffffff;
  }

  input:checked {
    background: radial-gradient(#333333 3px, #ffffff 4px);
  }
`;

const Canvas = styled.div`
  position: relative;
  overflow: hidden;
  background: #000000;
`;

const Drawing = styled.svg`
  display: block;
  width: 100%;
  fill: none;
`;

const DrawingLabel = styled.text`
  fill: #ffffff;
  font-family: "Noto Sans CJK SC", sans-serif;
  font-size: 27px;
  font-weight: 300;
`;

const DrawingValue = styled.text`
  fill: #1fdc2f;
  font-family: "Liberation Serif", serif;
  font-size: 26px;
`;

const ValueInput = styled.input`
  position: absolute;
  top: 182px;
  left: 148px;
  width: 42px;
  height: 15px;
  padding-left: 1px;
  background: linear-gradient(90deg, #3399ff 34px, #ffffff 34px);
  color: #ffffff;
  font-family: "Liberation Mono", monospace;
  font-size: 13px;
`;

const DialogFooter = styled.div`
  display: flex;
  align-items: center;
  justify-content: flex-end;
  height: 45px;
  padding-right: 26px;
`;

const FooterButton = styled.button`
  width: 73px;
  height: 25px;
  border: 1px solid #adadad;
  background: #e1e1e1;
`;

const PointWindow = styled.div`
  position: absolute;
  top: 152px;
  left: 73px;
  width: 52px;
  background: #ffffff;
  box-shadow: 1px 2px 6px rgba(0, 0, 0, 0.5);

  button {
    display: block;
    width: 52px;
    height: 23px;
    border: 1px solid #d8d8d8;
    border-right: 2px solid #6c6c6c;
    border-bottom: 2px solid #6c6c6c;
    background: #f0f0f0;
  }
`;

const PointTitle = styled.div`
  display: flex;
  align-items: center;
  justify-content: space-between;
  height: 25px;
  padding: 0 2px 0 3px;
  color: #999999;

  span {
    width: 18px;
    height: 19px;
    background: #e6e6e6;
    color: #f2f2f2;
    text-align: center;
  }
`;

const SpeedWidget = styled.div`
  position: absolute;
  top: 4px;
  left: 754px;
  display: flex;
  align-items: center;
`;

const SpeedBall = styled.div`
  z-index: 1;
  width: 48px;
  height: 48px;
  border: 2px solid #dfe5e1;
  border-radius: 50%;
  background: radial-gradient(ellipse 24px 11px at 50% 0, #a4cdb4, #21804c 90%, transparent), #43c75e;
  box-shadow: 0 0 2px #555555, inset 0 0 0 1px #35845a;
  color: #ffffff;
  font-family: "Liberation Sans", sans-serif;
  font-size: 14px;
  line-height: 44px;
  text-align: center;
`;

const SpeedPill = styled.div`
  display: flex;
  align-items: center;
  width: 102px;
  height: 38px;
  margin-left: -24px;
  padding: 0 6px 0 26px;
  border-radius: 0 19px 19px 0;
  background: linear-gradient(#fafafa, #e2e2e2);
  box-shadow: 0 1px 4px rgba(0, 0, 0, 0.45);
`;

const Speeds = styled.div`
  display: flex;
  flex: 1;
  flex-direction: column;
  padding-right: 4px;
  font-size: 9px;
  line-height: 15px;
  text-align: right;
`;

const MeterTab = styled.div`
  position: absolute;
  top: 0;
  left: 1004px;
  padding: 3px 4px 2px;
  border-radius: 8px 8px 0 0;
  background: #ffffff;
  box-shadow: 0 0 3px #666666;
`;

const Meter = styled.div`
  display: flex;
  gap: 1px;
  padding: 2px;
  background: #1c79c7;
`;

const MeterBar = styled.span`
  width: 2px;
  height: 6px;
  background: ${({ $on }) => ($on ? "#52d977" : "#4f9bd8")};
`;

const ImeBar = styled.div`
  position: absolute;
  top: 9px;
  left: 890px;
  display: flex;

  > svg {
    z-index: 1;
  }
`;

const ImeTools = styled.div`
  display: flex;
  align-items: center;
  justify-content: space-between;
  width: 167px;
  height: 23px;
  margin: 4px 0 0 -10px;
  padding: 0 4px 0 15px;
  border: 1px solid #c3cdd8;
  background: #ffffff;
`;

const ImeMode = styled.strong`
  color: #2470bd;
  font-size: 16px;
`;

export default App;
